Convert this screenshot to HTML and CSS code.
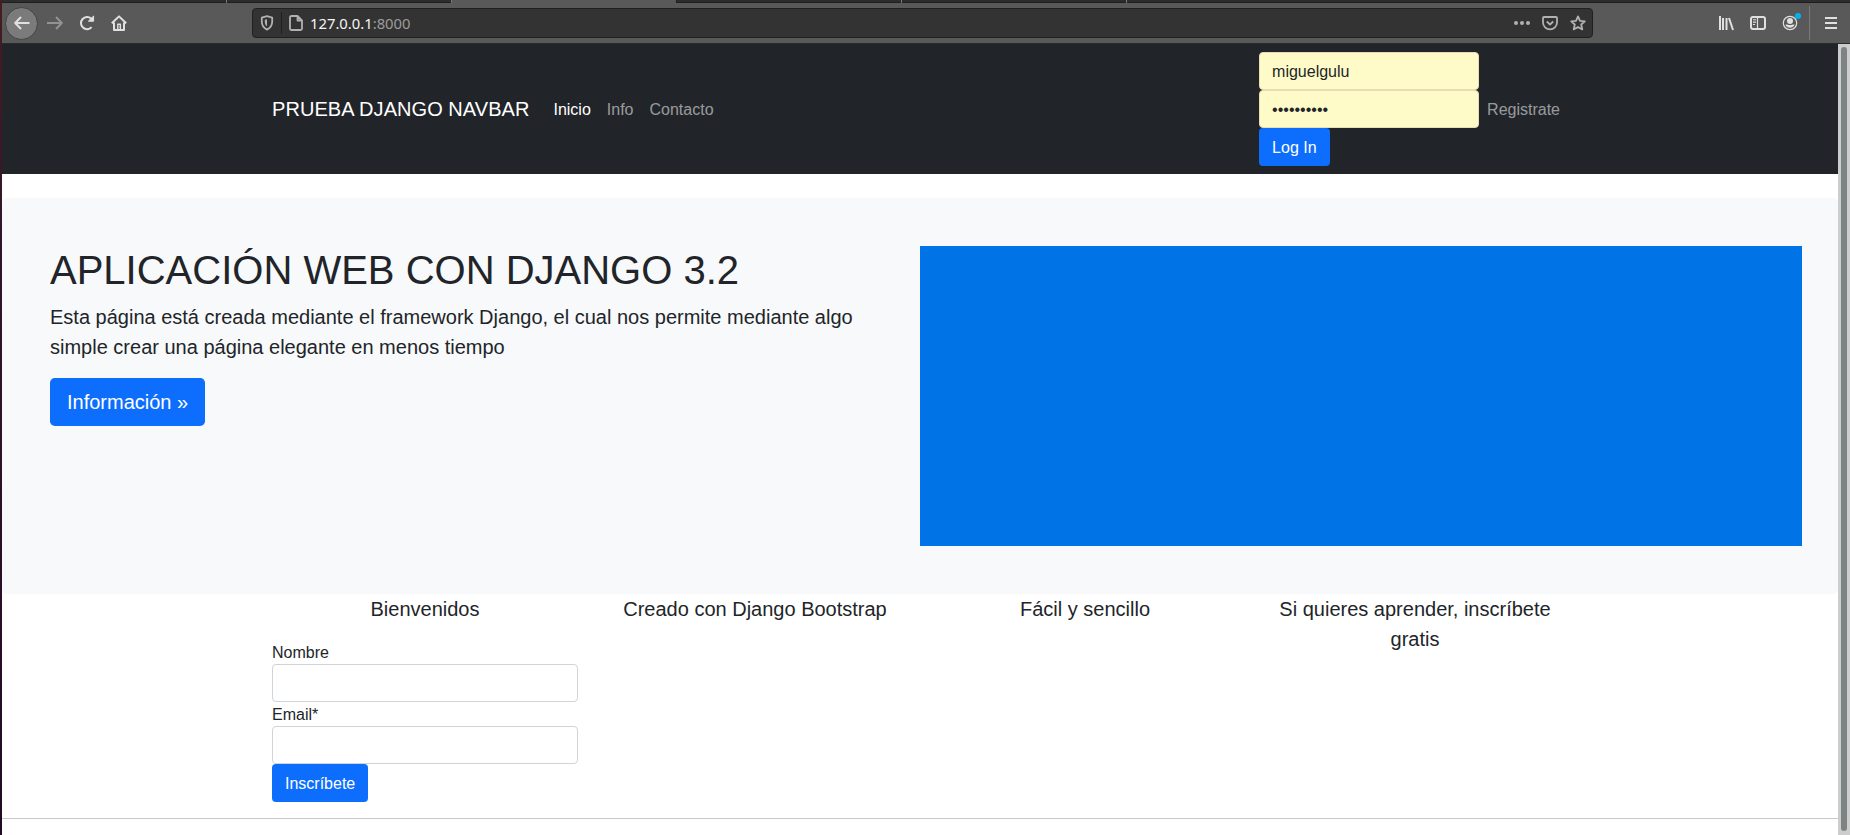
FILE: index.html
```html
<!DOCTYPE html>
<html lang="es">
<head>
<meta charset="utf-8">
<title>Prueba Django</title>
<link rel="stylesheet" href="styles.css">
</head>
<body>
<div class="desktop-edge"></div>
<div class="window">
  <div class="tabs"><i></i><i></i><i class="active"></i><i></i><i></i><i></i></div>
  <div class="toolbar">
    <div class="nav-buttons">
      <span class="back"><svg width="16" height="16" viewBox="0 0 16 16"><path d="M15.500 8H1.500M7 2L1.200 8 7 14"/></svg></span>
      <svg class="dim" width="16" height="16" viewBox="0 0 16 16"><path d="M0 8h14.500M9 2l5.800 6L9 14"/></svg>
      <svg width="16" height="16" viewBox="0 0 16 16"><path d="M12.600 12.200A6.100 6.100 0 1 1 12.200 3.600L14 5.500"/><path d="M14.600 1v5.200H9.400z" fill="#e0e0e0" stroke-width="1"/></svg>
      <svg width="16" height="16" viewBox="0 0 16 16"><path d="M.8 8.300L8 1.400l7.200 6.900M3 7.500v7.400h10V7.500"/><path d="M6.800 14.500V9.200h2.600v5.300M9 11.500v1" stroke-width="1.400"/></svg>
    </div>
    <div class="url">
      <svg class="shield" width="14" height="16" viewBox="0 0 14 16"><path d="M7 1.200l5.200 1.400v4.200c0 3.600-1.700 6-5.200 7.800-3.500-1.800-5.200-4.200-5.200-7.800V2.600z"/><path d="M7 4.200v7.300C5.500 10.300 4.800 8.800 4.800 7V4.800z" fill="#b1b1b1" stroke="none"/></svg>
      <span class="sep"></span>
      <svg class="doc" width="14" height="16" viewBox="0 0 14 16"><path d="M3 1h5.500L13 5.500V13.500a1.500 1.500 0 0 1-1.500 1.500H2.500A1.500 1.500 0 0 1 1 13.500V2.500A1.500 1.500 0 0 1 2.500 1zM8.500 1v4.500H13"/></svg>
      <span class="address">127.0.0.1<b>:8000</b></span>
      <div class="url-actions">
        <svg width="16" height="16" viewBox="0 0 16 16"><g fill="#b1b1b1" stroke="none"><circle cx="2" cy="8" r="2"/><circle cx="8" cy="8" r="2"/><circle cx="14" cy="8" r="2"/></g></svg>
        <svg width="16" height="16" viewBox="0 0 16 16"><path d="M2 2h12a1 1 0 0 1 1 1v4.500a7 6.800 0 0 1-14 0V3a1 1 0 0 1 1-1zM4.800 6.500L8 9.500l3.200-3"/></svg>
        <svg width="16" height="16" viewBox="0 0 16 16"><path d="M8 1.400l2 4.400 4.800.5-3.600 3.200 1.100 4.900L8 12l-4.300 2.400 1.100-4.900L1.200 6.300 6 5.800z"/></svg>
      </div>
    </div>
    <div class="tools">
      <svg width="16" height="16" viewBox="0 0 16 16"><path d="M2 1v14M5 3v12M8.500 3v12M11 3l4 12"/></svg>
      <svg width="16" height="16" viewBox="0 0 16 16"><rect x="1" y="2" width="14" height="12" rx="2"/><path d="M7.500 2v12" stroke-width="1.200"/><path d="M3 4.700h3M3 7.100h3M3 9.500h2" stroke-width="1.100"/></svg>
      <span class="account"><svg width="16" height="16" viewBox="0 0 16 16"><circle cx="8" cy="8" r="6.700" stroke-width="1.200"/><circle cx="8" cy="6" r="3" fill="#e0e0e0" stroke="none"/><path d="M3.400 9.800c1.500-.9 1.900.1 4.600.1s3.100-1 4.600-.1c-.8 1.700-2.500 3-4.600 3s-3.800-1.300-4.600-3z" fill="#e0e0e0" stroke="none"/></svg><i></i></span>
      <span class="divider"></span>
      <svg class="menu" width="12" height="16" viewBox="0 0 12 16"><path d="M0 3h12M0 8h12M0 13h12"/></svg>
    </div>
  </div>
  <div class="viewport">
    <div class="page">
      <header class="navbar">
        <div class="container nav-row">
          <span class="brand">PRUEBA DJANGO NAVBAR</span>
          <nav><a class="current">Inicio</a><a>Info</a><a>Contacto</a></nav>
          <form class="login">
            <div class="field saved">miguelgulu</div>
            <div class="field saved">••••••••••</div>
            <span class="btn">Log In</span>
          </form>
          <nav><a>Registrate</a></nav>
        </div>
      </header>
      <section class="hero">
        <div class="hero-text">
          <h1>APLICACIÓN WEB CON DJANGO 3.2</h1>
          <p>Esta página está creada mediante el framework Django, el cual nos permite mediante algo simple crear una página elegante en menos tiempo</p>
          <span class="btn large">Información »</span>
        </div>
        <div class="hero-image"></div>
      </section>
      <main class="container columns">
        <div>
          <p class="lead">Bienvenidos</p>
          <form class="signup">
            <label>Nombre</label><div class="field"></div>
            <label>Email*</label><div class="field"></div>
            <span class="btn">Inscríbete</span>
          </form>
        </div>
        <div><p class="lead">Creado con Django Bootstrap</p></div>
        <div><p class="lead">Fácil y sencillo</p></div>
        <div><p class="lead">Si quieres aprender, inscríbete gratis</p></div>
      </main>
      <hr>
    </div>
    <div class="scrollbar"><div class="thumb"></div></div>
  </div>
</div>
</body>
</html>
```
FILE: styles.css
```css
* { box-sizing: border-box; }
body { margin: 0; height: 835px; display: flex; overflow: hidden; background: #fff; color: #212529; font: 16px/24px "Liberation Sans", Arial, sans-serif; }
p, h1 { margin: 0; font-weight: 400; }
svg { display: block; fill: none; stroke: #e0e0e0; stroke-width: 2; stroke-linejoin: round; stroke-linecap: butt; flex: none; }
.desktop-edge { width: 2px; background: linear-gradient(#451d22, #32142a 30%, #220b24); }
.window { flex: 1; display: flex; flex-direction: column; min-width: 0; }

.tabs { display: flex; height: 3px; background: #2d2d2d; border-bottom: 1px solid #1e1e1e; }
.tabs i { width: 225px; height: 3px; border-right: 1px solid #777; flex: none; }
.tabs i:last-child { border: 0; }
.tabs .active { background: #595959; border-color: #1e1e1e; }
.toolbar { height: 41px; background: #595959; border-bottom: 1px solid #2a2b2c; display: flex; align-items: center; flex: none; }
.nav-buttons { display: flex; align-items: center; gap: 16px; width: 250px; padding-left: 3px; }
.back { width: 33px; height: 33px; margin-right: -7px; border: 1px solid #434343; border-radius: 50%; background: #7b7b7b; display: grid; place-items: center; }
.dim { stroke: #929292; }
.url { width: 1341px; height: 30px; background: #333; border: 1px solid #202020; border-radius: 4px; display: flex; align-items: center; padding: 0 6px 0 7px; }
.url svg { stroke: #b1b1b1; stroke-width: 1.8; }
.url .shield { margin-right: 7px; }
.url .doc { margin: 0 7px 0 7px; }
.sep { width: 1px; height: 22px; background: #202020; }
.address { font: 14.8px/20px "Noto Sans", sans-serif; color: #f5f5f5; }
.address b { font-weight: 400; color: #9b9b9b; }
.url-actions { margin-left: auto; display: flex; gap: 12px; }
.tools { display: flex; align-items: center; margin-left: 125px; gap: 16px; }
.account { position: relative; }
.account i { position: absolute; width: 6px; height: 6px; top: -2px; right: -3px; border-radius: 50%; background: #00b3f4; }
.divider { width: 1px; height: 34px; background: #7a7a7a; margin-left: -5px; }
.menu { margin-left: -1px; }

.viewport { flex: 1; display: flex; min-height: 0; }
.page { width: 1836px; }
.scrollbar { width: 12px; padding: 3px; background: #cdcdcd; }
.thumb { height: 784px; width: 6px; border-radius: 3px; background: #7d8282; }
.container { width: 1320px; margin: 0 auto; }
.navbar { background: #212529; padding: 8px 0; height: 130px; }
.nav-row { display: flex; align-items: center; padding: 0 12px; }
.brand { font-size: 20px; line-height: 30px; letter-spacing: .055px; color: #fff; margin-right: 16px; white-space: nowrap; }
nav { display: flex; }
nav a { padding: 9px 8px 7px; color: rgba(255, 255, 255, .55); }
nav .current { color: #fff; }
.login { width: 220px; margin-left: auto; }
.field { height: 38px; border: 1px solid #ced4da; border-radius: 4px; padding: 7px 12px 5px; background: #fff; }
.saved { background: #fffbc8; border-color: #e8dcb0; color: #212529; }
.btn { display: block; width: max-content; padding: 8px 13px 6px; border-radius: 4px; background: #0d6efd; color: #fff; }
.large { font-size: 20px; line-height: 30px; padding: 9px 17px; border-radius: 4.8px; }

.hero { margin-top: 24px; padding: 48px 36px; background: #f8f9fb; border-radius: 4.8px; display: grid; grid-template-columns: 1fr 1fr; }
.hero-text { padding: 0 12px; }
h1 { font-size: 40px; line-height: 48px; margin-bottom: 8px; }
.hero-text p { font-size: 20px; line-height: 30px; margin-bottom: 16px; }
.hero-image { height: 300px; background: #0073e6; }
.columns { display: grid; grid-template-columns: repeat(4, 1fr); }
.columns > div { padding: 0 12px; }
.lead { font-size: 20px; line-height: 30px; text-align: center; margin-bottom: 16px; }
.signup label { display: block; height: 24px; padding-top: 1px; }
hr { margin: 16px 0 0; border: 0; height: 1px; background: #c8c9ca; }
```
